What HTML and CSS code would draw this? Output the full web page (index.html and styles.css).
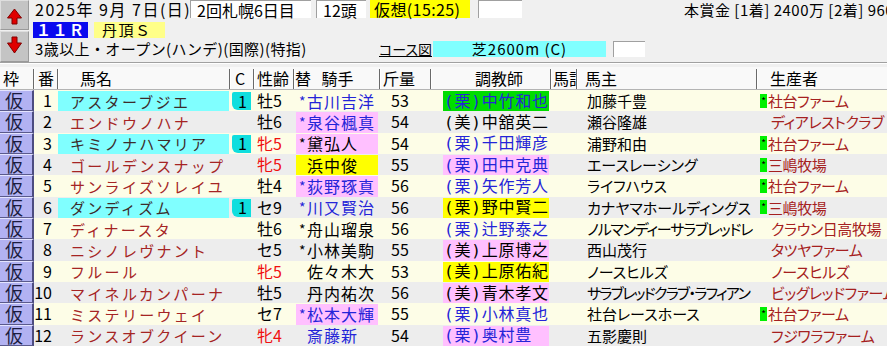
FILE: index.html
```html
<!DOCTYPE html>
<html lang="ja">
<head>
<meta charset="utf-8">
<title>出馬表</title>
<link rel="stylesheet" href="styles.css">
</head>
<body>
<div class="top">
  <div class="arrows">
    <div class="arr up"><svg width="27" height="28" viewBox="0 0 27 28"><polygon points="13.5,8 20.5,17 16,17 16,23 11,23 11,17 6.5,17" fill="#e00000" stroke="#800000" stroke-width="1"/></svg></div>
    <div class="arr down"><svg width="27" height="29" viewBox="0 0 27 29"><polygon points="11,5 16,5 16,11 20.5,11 13.5,21 6.5,11 11,11" fill="#e00000" stroke="#800000" stroke-width="1"/></svg></div>
  </div>
  <div class="info">
    <div class="l1">
      <span class="date">2025年 9月 7日(日)</span>
      <span class="box b-kai">2回札幌6日目</span>
      <span class="box b-tou">12頭</span>
      <span class="box b-kaso">仮想(15:25)</span>
      <span class="box b-empty"></span>
      <span class="prize">本賞金 [1着] 2400万 [2着] 960</span>
    </div>
    <div class="l2">
      <span class="rno">１１Ｒ</span>
      <span class="rname">丹頂Ｓ</span>
    </div>
    <div class="l3">
      <span class="cond">3歳以上・オープン(ハンデ)(国際)(特指)</span>
      <span class="course">コース図</span>
      <span class="dist">芝2600m (C)</span>
      <span class="box b-empty2"></span>
    </div>
  </div>
</div>
<div class="sep"></div>
<div class="table">
  <div class="row hdr">
    <div class="h h-waku">枠</div>
    <div class="h h-num">番</div>
    <div class="h h-name">馬名</div>
    <div class="h h-c">C</div>
    <div class="h h-sex">性齢</div>
    <div class="h h-jk">替 騎手</div>
    <div class="h h-kin">斤量</div>
    <div class="h h-tr">調教師</div>
    <div class="h h-mk">馬記</div>
    <div class="h h-own">馬主</div>
    <div class="h h-brd">生産者</div>
  </div>

  <div class="row odd">
    <div class="c waku">仮</div><div class="c num">1</div>
    <div class="c name"><span class="nbg cy">アスターブジエ</span></div>
    <div class="c cc"><span class="cbox">1</span></div>
    <div class="c sex">牡5</div>
    <div class="c jk"><span class="jbg blue"><span class="ast">*</span>古川吉洋</span></div>
    <div class="c kin">53</div>
    <div class="c tr"><span class="tbg green blue">(栗)中竹和也</span></div>
    <div class="c mk"></div>
    <div class="c own">加藤千豊</div>
    <div class="c brd"><span class="mark">*</span>社台ファーム</div>
  </div>

  <div class="row even">
    <div class="c waku">仮</div><div class="c num">2</div>
    <div class="c name"><span class="nbg">エンドウノハナ</span></div>
    <div class="c cc"></div>
    <div class="c sex">牡6</div>
    <div class="c jk"><span class="jbg pink blue"><span class="ast">*</span>泉谷楓真</span></div>
    <div class="c kin">54</div>
    <div class="c tr"><span class="tbg">(美)中舘英二</span></div>
    <div class="c mk"></div>
    <div class="c own">瀬谷隆雄</div>
    <div class="c brd nm">ディアレストクラブ</div>
  </div>

  <div class="row odd">
    <div class="c waku">仮</div><div class="c num">3</div>
    <div class="c name"><span class="nbg cy">キミノナハマリア</span></div>
    <div class="c cc"><span class="cbox">1</span></div>
    <div class="c sex red">牝5</div>
    <div class="c jk"><span class="jbg pink"><span class="ast">*</span>黛弘人</span></div>
    <div class="c kin">54</div>
    <div class="c tr"><span class="tbg blue">(栗)千田輝彦</span></div>
    <div class="c mk"></div>
    <div class="c own">浦野和由</div>
    <div class="c brd"><span class="mark">*</span>社台ファーム</div>
  </div>

  <div class="row even">
    <div class="c waku">仮</div><div class="c num">4</div>
    <div class="c name"><span class="nbg">ゴールデンスナップ</span></div>
    <div class="c cc"></div>
    <div class="c sex red">牝5</div>
    <div class="c jk"><span class="jbg yellow"><span class="ast"></span>浜中俊</span></div>
    <div class="c kin">55</div>
    <div class="c tr"><span class="tbg pink blue">(栗)田中克典</span></div>
    <div class="c mk"></div>
    <div class="c own">エースレーシング</div>
    <div class="c brd"><span class="mark">*</span>三嶋牧場</div>
  </div>

  <div class="row odd">
    <div class="c waku">仮</div><div class="c num">5</div>
    <div class="c name"><span class="nbg">サンライズソレイユ</span></div>
    <div class="c cc"></div>
    <div class="c sex">牡4</div>
    <div class="c jk"><span class="jbg pink blue"><span class="ast">*</span>荻野琢真</span></div>
    <div class="c kin">56</div>
    <div class="c tr"><span class="tbg blue">(栗)矢作芳人</span></div>
    <div class="c mk"></div>
    <div class="c own">ライフハウス</div>
    <div class="c brd"><span class="mark">*</span>社台ファーム</div>
  </div>

  <div class="row even">
    <div class="c waku">仮</div><div class="c num">6</div>
    <div class="c name"><span class="nbg cy">ダンディズム</span></div>
    <div class="c cc"><span class="cbox">1</span></div>
    <div class="c sex">セ9</div>
    <div class="c jk"><span class="jbg blue"><span class="ast">*</span>川又賢治</span></div>
    <div class="c kin">56</div>
    <div class="c tr"><span class="tbg yellow">(栗)野中賢二</span></div>
    <div class="c mk"></div>
    <div class="c own">カナヤマホールディングス</div>
    <div class="c brd"><span class="mark">*</span>三嶋牧場</div>
  </div>

  <div class="row odd">
    <div class="c waku">仮</div><div class="c num">7</div>
    <div class="c name"><span class="nbg">ディナースタ</span></div>
    <div class="c cc"></div>
    <div class="c sex">牡6</div>
    <div class="c jk"><span class="jbg"><span class="ast">*</span>舟山瑠泉</span></div>
    <div class="c kin">56</div>
    <div class="c tr"><span class="tbg blue">(栗)辻野泰之</span></div>
    <div class="c mk"></div>
    <div class="c own tight1">ノルマンディーサラブレッドレ</div>
    <div class="c brd nm">クラウン日高牧場</div>
  </div>

  <div class="row even">
    <div class="c waku">仮</div><div class="c num">8</div>
    <div class="c name"><span class="nbg">ニシノレヴナント</span></div>
    <div class="c cc"></div>
    <div class="c sex">セ5</div>
    <div class="c jk"><span class="jbg"><span class="ast">*</span>小林美駒</span></div>
    <div class="c kin">55</div>
    <div class="c tr"><span class="tbg pink">(美)上原博之</span></div>
    <div class="c mk"></div>
    <div class="c own">西山茂行</div>
    <div class="c brd nm">タツヤファーム</div>
  </div>

  <div class="row odd">
    <div class="c waku">仮</div><div class="c num">9</div>
    <div class="c name"><span class="nbg">フルール</span></div>
    <div class="c cc"></div>
    <div class="c sex red">牝5</div>
    <div class="c jk"><span class="jbg"><span class="ast"></span>佐々木大</span></div>
    <div class="c kin">53</div>
    <div class="c tr"><span class="tbg yellow">(美)上原佑紀</span></div>
    <div class="c mk"></div>
    <div class="c own">ノースヒルズ</div>
    <div class="c brd nm">ノースヒルズ</div>
  </div>

  <div class="row even">
    <div class="c waku">仮</div><div class="c num">10</div>
    <div class="c name"><span class="nbg">マイネルカンパーナ</span></div>
    <div class="c cc"></div>
    <div class="c sex">牡5</div>
    <div class="c jk"><span class="jbg"><span class="ast"></span>丹内祐次</span></div>
    <div class="c kin">56</div>
    <div class="c tr"><span class="tbg pink">(美)青木孝文</span></div>
    <div class="c mk"></div>
    <div class="c own tight2">サラブレッドクラブ・ラフィアン</div>
    <div class="c brd nm">ビッグレッドファーム</div>
  </div>

  <div class="row odd">
    <div class="c waku">仮</div><div class="c num">11</div>
    <div class="c name"><span class="nbg">ミステリーウェイ</span></div>
    <div class="c cc"></div>
    <div class="c sex">セ7</div>
    <div class="c jk"><span class="jbg pink blue"><span class="ast">*</span>松本大輝</span></div>
    <div class="c kin">55</div>
    <div class="c tr"><span class="tbg blue">(栗)小林真也</span></div>
    <div class="c mk"></div>
    <div class="c own">社台レースホース</div>
    <div class="c brd"><span class="mark">*</span>社台ファーム</div>
  </div>

  <div class="row even">
    <div class="c waku">仮</div><div class="c num">12</div>
    <div class="c name"><span class="nbg">ランスオブクイーン</span></div>
    <div class="c cc"></div>
    <div class="c sex red">牝4</div>
    <div class="c jk"><span class="jbg blue"><span class="ast"></span>斎藤新</span></div>
    <div class="c kin">54</div>
    <div class="c tr"><span class="tbg pink blue">(栗)奥村豊</span></div>
    <div class="c mk"></div>
    <div class="c own">五影慶則</div>
    <div class="c brd nm">フジワラファーム</div>
  </div>
</div>
</body>
</html>
```
FILE: styles.css
```css
* { box-sizing: border-box; }
html, body { margin: 0; padding: 0; }
body {
  width: 887px;
  height: 346px;
  overflow: hidden;
  background: #f0f0f0;
  font-family: "Noto Sans CJK JP", sans-serif;
  color: #000;
}

/* ---------- top area ---------- */
.top { display: flex; height: 62px; }
.arrows { width: 29px; display: flex; flex-direction: column; gap: 1px; flex-shrink: 0; }
.arr {
  background: #c4c4c4;
  border-top: 1px solid #dedede;
  border-left: 1px solid #dedede;
  border-right: 1px solid #9a9a9a;
  border-bottom: 1px solid #9a9a9a;
}
.arr svg { display: block; }
.arr.up { height: 30px; }
.arr.down { height: 31px; }

.info { flex: 1; display: flex; flex-direction: column; min-width: 0; }
.l1 { display: flex; height: 18px; font-size: 16px; line-height: 18px; white-space: nowrap; }
.l2 { display: flex; height: 16px; margin-top: 4px; }
.l3 { display: flex; height: 17px; margin-top: 2px; white-space: nowrap; }

.date { width: 161px; padding-left: 6px; flex-shrink: 0; letter-spacing: 1.5px; }
.box {
  background: #fff;
  border-top: 1px solid #a0a0a0;
  border-left: 1px solid #a0a0a0;
  flex-shrink: 0;
}
.b-kai { width: 121px; padding-left: 6px; }
.b-tou { width: 50px; margin-left: 5px; padding-left: 6px; }
.b-kaso { width: 100px; margin-left: 4px; padding-left: 4px; background: #ffff00; border: none; letter-spacing: 0.4px; }
.b-empty { width: 44px; margin-left: 8px; }
.prize { margin-left: 162px; font-size: 15px; flex-shrink: 0; line-height: 19px; letter-spacing: 0.5px; }

.rno {
  margin-left: 4px;
  width: 55px;
  background: #0a0aef;
  color: #fff;
  font-weight: bold;
  font-size: 15px;
  line-height: 16px;
  letter-spacing: 1.5px;
  padding-left: 3px;
}
.rname {
  margin-left: 6px;
  width: 71px;
  background: #ffff88;
  font-size: 15px;
  line-height: 16px;
  padding-left: 8px;
  letter-spacing: 1.5px;
}

.cond { width: 350px; padding-left: 6px; font-size: 15px; line-height: 17px; flex-shrink: 0; letter-spacing: 0.4px; }
.course {
  width: 48px;
  font-size: 14px;
  line-height: 17px;
  text-decoration: underline;
  font-feature-settings: "palt";
  margin-top: 1px;
}
.dist {
  margin-left: 6px;
  margin-top: 1px;
  width: 173px;
  height: 16px;
  background: #80ffff;
  text-align: center;
  font-size: 15px;
  line-height: 16px;
  letter-spacing: 1px;
}
.b-empty2 { width: 32px; margin-left: 7px; margin-top: 1px; height: 16px; }

.sep {
  height: 5px;
  border-top: 1px solid #a0a0a0;
  box-shadow: inset 0 1px 0 #ffffff;
}

/* ---------- table ---------- */
.row {
  display: grid;
  grid-template-columns: 34px 24px 172px 24px 40px 86px 51px 120px 26px 180px 130px;
  height: 21.333px;
}
.row.odd { background: #fdfde7; }
.row.even { background: #ededed; }

.hdr {
  height: 23px;
  background: #f9f9f9;
  border-bottom: 1px solid #b4b4b4;
  padding-top: 2px;
}
.h {
  font-size: 16px;
  line-height: 19px;
  white-space: nowrap;
  overflow: hidden;
  border-right: 1px solid #6a6a6a;
  box-shadow: 1px 0 0 #ffffff;
}
.h-waku { padding-left: 3px; }
.h-num { padding-left: 4px; }
.h-name { padding-left: 22px; }
.h-c { padding-left: 5px; }
.h-sex { padding-left: 3px; }
.h-jk { padding-left: 1px; word-spacing: 7px; }
.h-kin { padding-left: 3px; }
.h-tr { padding-left: 44px; }
.h-mk { padding-left: 2px; }
.h-own { padding-left: 8px; }
.h-brd { padding-left: 13px; border-right: none; }

.c {
  display: flex;
  align-items: center;
  white-space: nowrap;
  overflow: hidden;
  font-size: 15px;
  line-height: 19px;
  min-width: 0;
}

.waku {
  background: #b2b2f2;
  color: #1c1c40;
  font-size: 18px;
  line-height: 19px;
  padding-left: 5px;
  border-right: 2px solid #4c4c80;
  border-bottom: 1px solid #5a5a8c;
  border-top: 1px solid #e4e4ff;
}
.num { justify-content: flex-end; padding-right: 6px; font-size: 16px; }

.name { align-items: stretch; padding-top: 1px; }
.nbg {
  display: flex;
  align-items: center;
  width: 171px;
  padding-left: 12px;
  letter-spacing: 2.3px;
  color: #a52424;
}
.nbg.cy { background: #80ffff; color: #3c2c2c; }

.cc { align-items: stretch; padding: 2px 0 1px 2px; }
.cbox {
  display: flex;
  align-items: center;
  width: 19px;
  padding-left: 6px;
  background: #10dede;
  border-radius: 2px 0 0 6px;
  font-size: 16px;
}

.sex { padding-left: 3px; font-size: 16px; }
.red { color: #f01010; }

.jk { align-items: stretch; padding: 1px 2px 0 2px; }
.jbg {
  display: flex;
  align-items: center;
  width: 82px;
  padding-left: 3px;
  font-size: 16px;
  letter-spacing: 1px;
}
.ast { display: inline-block; width: 8px; font-size: 14px; letter-spacing: 0; flex-shrink: 0; }

.pink { background: #ffc0ff; }
.yellow { background: #ffff00; }
.green { background: #00dc00; }
.blue { color: #2424d8; }

.kin { padding-left: 11px; font-size: 16px; }

.tr { align-items: stretch; padding-top: 1px; }
.tbg {
  display: flex;
  align-items: center;
  margin-left: 12px;
  width: 106px;
  padding-left: 1px;
  font-family: "DejaVu Sans Mono", "Noto Sans CJK JP", monospace;
  font-size: 16px;
  letter-spacing: 0.8px;
}

.own { padding-left: 10px; font-feature-settings: "palt"; }
.own.tight1 { letter-spacing: -1.2px; }
.own.tight2 { letter-spacing: -1.7px; }
.brd { color: #a52020; font-feature-settings: "palt"; letter-spacing: -0.4px; }
.brd.nm { padding-left: 14px; }
.mark {
  display: inline-flex;
  justify-content: center;
  align-items: center;
  width: 7px;
  height: 14px;
  margin: 0 1px 0 3px;
  background: #00f000;
  color: #000;
  font-size: 10px;
  line-height: 14px;
  flex-shrink: 0;
}
```
